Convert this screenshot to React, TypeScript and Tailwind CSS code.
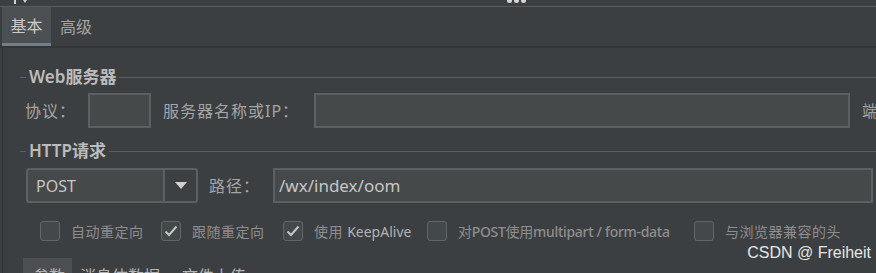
import React from 'react';

const cjk = '"Noto Sans", "Noto Sans CJK SC", sans-serif';

interface CheckItem {
  label: React.ReactNode;
  checked: boolean;
  width: string;
}

const CheckBox = ({ checked }: { checked: boolean }) => (
  <div className="flex h-[20px] w-[20px] shrink-0 items-center justify-center rounded-[3px] border border-[#636668] bg-[#43484a]">
    {checked && (
      <svg width="14" height="12" viewBox="0 0 14 12">
        <path d="M1.5 6.5 L5 10 L12.5 1.5" fill="none" stroke="#c4c4c4" strokeWidth="2" />
      </svg>
    )}
  </div>
);

const TitledRule = ({ title }: { title: string }) => (
  <div className="ml-[17px] flex h-[18px] items-center">
    <div className="h-px w-[6px] bg-[#5c5e60]" />
    <span className="ml-[3px] text-[17px] font-semibold leading-[18px] text-[#bcbcbc]">{title}</span>
    <div className="ml-[3px] h-px flex-1 bg-[#5c5e60]" />
  </div>
);

const checks: CheckItem[] = [
  { label: '自动重定向', checked: false, width: 'w-[121px]' },
  { label: '跟随重定向', checked: true, width: 'w-[122px]' },
  {
    label: (
      <>
        使用 <span className="tracking-normal text-[#b2b2b2]">KeepAlive</span>
      </>
    ),
    checked: true,
    width: 'w-[144px]',
  },
  {
    label: (
      <span className="tracking-[-0.3px]">
        对<span className="font-medium">POST</span>使用<span className="font-medium">multipart / form-data</span>
      </span>
    ),
    checked: false,
    width: 'w-[267px]',
  },
  { label: '与浏览器兼容的头', checked: false, width: 'w-[160px]' },
];

export default function App() {
  return (
    <div
      className="relative flex h-[273px] w-[876px] flex-col overflow-hidden bg-[#3c3f41]"
      style={{ fontFamily: cjk }}
    >
      {/* Top strip (cut off toolbar) */}
      <div className="relative flex h-[6px] shrink-0 items-start">
        <svg className="ml-[11px] mt-[-6px]" width="26" height="12" viewBox="0 0 26 12">
          <path d="M4 0 V10" stroke="#cfcfcf" strokeWidth="2" />
          <path d="M14 0 V6" stroke="#cfcfcf" strokeWidth="2" />
          <path d="M10 3 L14 9 L18 3 Z" fill="#cfcfcf" />
        </svg>
        <div className="ml-[470px] mt-[-2px] flex gap-[2px]">
          <div className="h-[5px] w-[5px] rounded-full bg-[#d6d6d6]" />
          <div className="h-[5px] w-[5px] rounded-full bg-[#d6d6d6]" />
          <div className="h-[5px] w-[5px] rounded-full bg-[#d6d6d6]" />
        </div>
      </div>
      <div className="h-px shrink-0 bg-[#5a5c5e]" />

      {/* Tabs */}
      <div className="flex h-[39px] shrink-0 items-stretch">
        <div className="ml-[2px] flex w-[49px] items-center justify-center border-b-[3px] border-[#737e86] bg-[#4b4f51] pt-[2px] text-[16px] text-[#cacaca]">
          基本
        </div>
        <div className="ml-[9px] flex items-center text-[16px] text-[#a4a4a4]">高级</div>
      </div>
      <div className="h-[2px] shrink-0 bg-[#333537]" />

      {/* Panel */}
      <div className="ml-[2px] flex min-w-0 flex-1 flex-col overflow-hidden border-l border-[#2e3032]">
        <div className="mt-[20px]">
          <TitledRule title="Web服务器" />
        </div>

        <div className="ml-[22px] mt-[7px] flex h-[35px] items-center whitespace-nowrap text-[16px] tracking-[1px] text-[#a5a5a5]">
          <span className="w-[63px] shrink-0">协议：</span>
          <div className="h-[35px] w-[63px] shrink-0 border-2 border-[#5d6062] bg-[#45494a]" />
          <span className="ml-[12px] w-[151px] shrink-0">服务器名称或IP：</span>
          <div className="h-[35px] w-[536px] shrink-0 border-2 border-[#5d6062] bg-[#45494a]" />
          <span className="ml-[12px] shrink-0">端口号</span>
        </div>

        <div className="mt-[14px]">
          <TitledRule title="HTTP请求" />
        </div>

        <div className="ml-[23px] mt-[8px] flex h-[35px] items-center">
          <div className="flex h-[35px] w-[172px] shrink-0 rounded-[3px] border-2 border-[#5d6062] bg-[#45494a]">
            <span className="flex flex-1 items-center pl-[8px] text-[16px] text-[#c6c6c6]">POST</span>
            <div className="flex w-[33px] items-center justify-center border-l-2 border-[#5d6062] bg-[#3d4042]">
              <svg width="12" height="7" viewBox="0 0 12 7">
                <path d="M0 0 H12 L6 7 Z" fill="#d0d0d0" />
              </svg>
            </div>
          </div>
          <span className="ml-[11px] w-[64px] shrink-0 text-[16px] tracking-[1px] text-[#a5a5a5]">路径：</span>
          <div className="flex h-[35px] w-[600px] shrink-0 items-center border-2 border-[#5d6062] bg-[#45494a] pl-[4px] text-[17px] text-[#c6c6c6]">
            /wx/index/oom
          </div>
        </div>

        <div className="ml-[37px] mt-[18px] flex h-[20px] items-center">
          {checks.map((c, i) => (
            <div key={i} className={`flex shrink-0 items-center ${c.width}`}>
              <CheckBox checked={c.checked} />
              <span className="ml-[11px] whitespace-nowrap text-[14px] tracking-[0.5px] text-[#8e8e8e]">
                {c.label}
              </span>
            </div>
          ))}
        </div>

        {/* Bottom tabs (cut off) */}
        <div className="ml-[20px] mt-[17px] flex h-[30px] items-start text-[16px] leading-[16px] text-[#b4b4b4]">
          <div className="h-[30px] w-[49px] bg-[#4b4f51] pl-[10px] pt-[10px]">参数</div>
          <div className="pl-[8px] pt-[10px]">消息体数据</div>
          <div className="pl-[22px] pt-[10px]">文件上传</div>
        </div>
      </div>

      {/* Watermark */}
      <div
        className="absolute right-[5px] top-[243px] text-[16px] leading-[19px] text-[#e6e6e6]"
        style={{ fontFamily: '"Liberation Sans", sans-serif' }}
      >
        CSDN @ Freiheit
      </div>
    </div>
  );
}
